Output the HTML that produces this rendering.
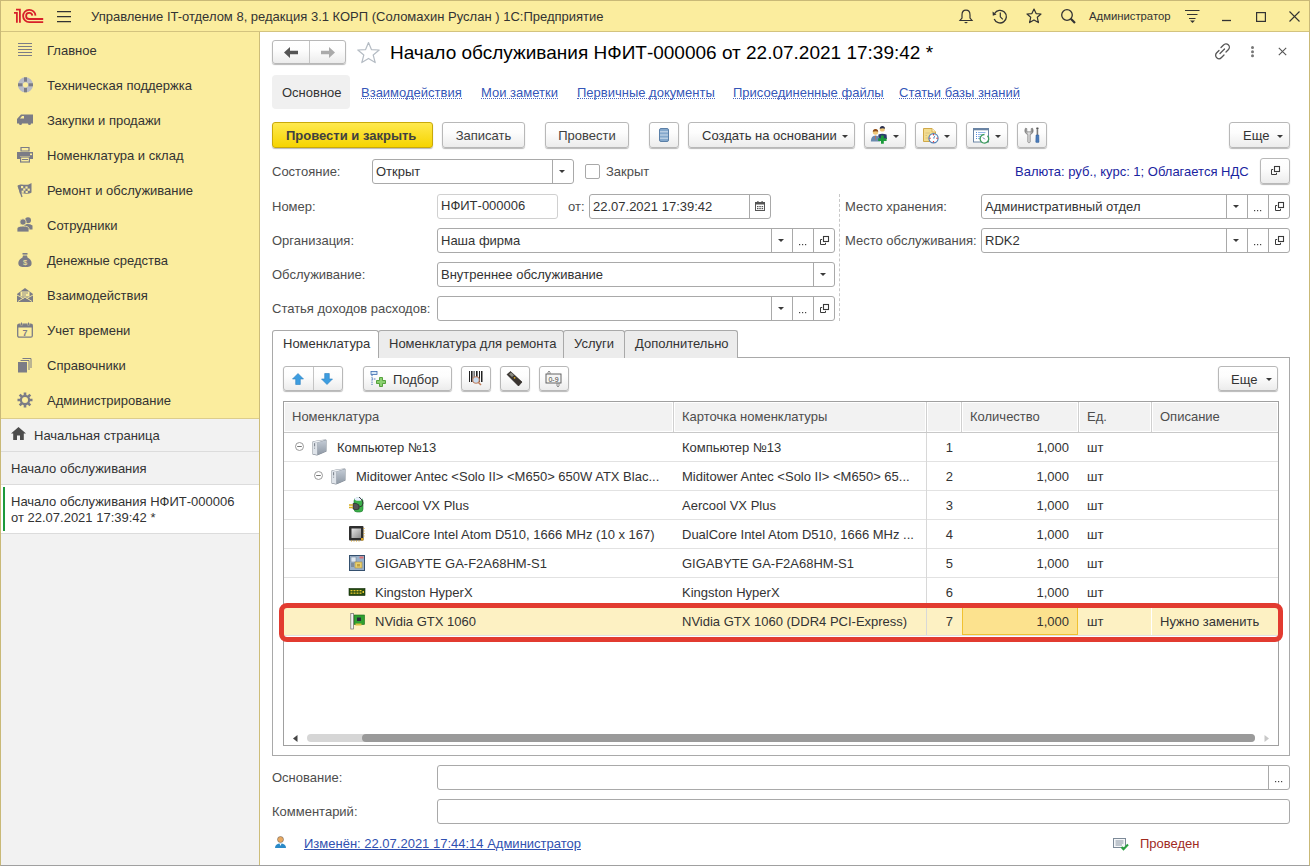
<!DOCTYPE html>
<html><head><meta charset="utf-8">
<style>
*{box-sizing:border-box;margin:0;padding:0}
html,body{width:1310px;height:866px;overflow:hidden;background:#fff}
body{font-family:"Liberation Sans",sans-serif;font-size:13px;color:#333;position:relative}
.a{position:absolute}
.t{position:absolute;height:20px;line-height:20px;white-space:nowrap}
svg{position:absolute;overflow:visible}
.btn{position:absolute;height:26px;border:1px solid #b8b8b8;border-radius:3px;background:linear-gradient(#fff 0%,#fdfdfd 40%,#ececec 100%);box-shadow:0 1px 1px rgba(0,0,0,.28);color:#404040}
.btn .t{top:2px}
.inp{position:absolute;height:25px;border:1px solid #a9a9a9;border-radius:3px;background:#fff}
.inp .t{top:1px;left:3px}
.div{position:absolute;top:0;bottom:0;width:0;border-left:1px solid #a9a9a9}
.lnk{color:#3556b8}
.lnk span{display:inline-block;line-height:10px;border-bottom:1px dotted #4a66c0}
.dd{position:absolute;width:0;height:0;border-left:3px solid transparent;border-right:3px solid transparent;border-top:3.5px solid #3a3a3a}
</style></head><body>
<!-- window frame -->
<div class="a" style="left:0;top:0;width:1310px;height:866px;border:1px solid #c9b977;border-bottom-color:#a0a0a0"></div>
<!-- title bar -->
<div class="a" style="left:1px;top:1px;width:1308px;height:31px;background:#fbed9e;border-bottom:1px solid #d3c37f"></div>
<svg style="left:0;top:0" width="50" height="30" viewBox="0 0 50 30">
 <g fill="none" stroke="#d7212a" stroke-width="1.8">
  <path d="M14 12.9 H16.9 V22.8 M16 9.7 H19.9 V22.8"/>
  <path d="M35.5 15.6 A6.2 6.2 0 1 0 29.3 22.2 H43.2"/>
  <path d="M32.3 15.6 A3.1 3.1 0 1 0 29.1 19 H43.2"/>
 </g>
</svg>
<svg style="left:57px;top:11px" width="14" height="12" viewBox="0 0 14 12"><g stroke="#333" stroke-width="1.2"><path d="M0 0.6H14M0 5.6H14M0 10.6H14"/></g></svg>
<div class="t" style="left:91px;top:7px;color:#333">Управление IT-отделом 8, редакция 3.1 КОРП (Соломахин Руслан ) 1С:Предприятие</div>
<!-- right title icons -->
<svg style="left:959px;top:9px" width="14" height="15" viewBox="0 0 14 15"><path d="M7 1.2 C4 1.2 3 3.5 3 6 V9 L1 11.5 H13 L11 9 V6 C11 3.5 10 1.2 7 1.2Z" fill="none" stroke="#333" stroke-width="1.2"/><path d="M5 13 H9 L7 14.5Z" fill="#333"/></svg>
<svg style="left:992px;top:9px" width="16" height="15" viewBox="0 0 16 15"><path d="M2.6 4.5 A6.3 6.3 0 1 1 2.2 10" fill="none" stroke="#333" stroke-width="1.3"/><path d="M0.5 2.5 L4.5 5.5 L0.8 6.8Z" fill="#333"/><path d="M8.3 3.5 V7.8 L10.8 10.3" fill="none" stroke="#333" stroke-width="1.2"/></svg>
<svg style="left:1026px;top:8px" width="16" height="16" viewBox="0 0 16 16"><path d="M8 1 L10.1 5.6 L15 6 L11.3 9.3 L12.4 14.6 L8 11.9 L3.6 14.6 L4.7 9.3 L1 6 L5.9 5.6Z" fill="none" stroke="#333" stroke-width="1.2" stroke-linejoin="round"/></svg>
<svg style="left:1061px;top:9px" width="15" height="15" viewBox="0 0 15 15"><circle cx="6" cy="6" r="5.3" fill="none" stroke="#333" stroke-width="1.3"/><path d="M9.8 9.8 L14 14" stroke="#333" stroke-width="2.2"/></svg>
<div class="t" style="left:1089px;top:6px;font-size:11.3px;color:#333">Администратор</div>
<svg style="left:1185px;top:10px" width="15" height="14" viewBox="0 0 15 14"><g stroke="#333" stroke-width="1.1"><path d="M0 0.5H14.5M2 4.5H12.5M4 8.5H10.5"/></g><path d="M5 10.5 H10 L7.5 13Z" fill="#333"/></svg>
<svg style="left:1222px;top:19px" width="10" height="3" viewBox="0 0 10 3"><path d="M0 1.5 H9" stroke="#333" stroke-width="1.3"/></svg>
<svg style="left:1256px;top:12px" width="10" height="10" viewBox="0 0 10 10"><rect x="0.6" y="0.6" width="8.8" height="8.8" fill="none" stroke="#333" stroke-width="1.2"/></svg>
<svg style="left:1289px;top:11px" width="11" height="11" viewBox="0 0 11 11"><path d="M0.5 0.5 L10.5 10.5 M10.5 0.5 L0.5 10.5" stroke="#333" stroke-width="1.1"/></svg>

<!-- sidebar -->
<div class="a" style="left:1px;top:32px;width:259px;height:833px;background:#f2f2f2;border-right:1px solid #cdbd7a"></div>
<div class="a" style="left:1px;top:32px;width:258px;height:387px;background:#fbed9e;border-bottom:1px solid #dccd8c"></div>
<svg style="left:17px;top:42px" width="16" height="16" viewBox="0 0 16 16"><g stroke="#7b7c86" stroke-width="1"><path d="M1 1.5H15M1 4.5H15M1 7.5H15M1 10.5H15M1 13.5H15"/></g></svg>
<div class="t" style="left:47px;top:41px">Главное</div>
<svg style="left:17px;top:77px" width="16" height="16" viewBox="0 0 16 16"><circle cx="8.5" cy="7.8" r="5.1" fill="none" stroke="#b9bcc6" stroke-width="4.9"/><g fill="#7b7c86"><rect x="7" y="0.3" width="3" height="4.4"/><rect x="7" y="10.9" width="3" height="4.4"/><rect x="1" y="6.3" width="4.4" height="3"/><rect x="11.6" y="6.3" width="4.4" height="3"/></g></svg>
<div class="t" style="left:47px;top:76px">Техническая поддержка</div>
<svg style="left:17px;top:113px" width="16" height="16" viewBox="0 0 16 16"><path d="M0 6 L4 1.5 H16 V10.5 H14 A1.5 1.5 0 0 1 11 10.5 H5 A1.5 1.5 0 0 1 2 10.5 H0Z" fill="#7b7c86"/><path d="M3 5.5 L5 3 H7 V5.5Z" fill="#fbed9e"/></svg>
<div class="t" style="left:47px;top:111px">Закупки и продажи</div>
<svg style="left:17px;top:147px" width="16" height="16" viewBox="0 0 16 16"><path d="M4 0.5H12V4H4Z" fill="none" stroke="#7b7c86" stroke-width="1.2"/><path d="M0 5H16V12H13V9H3V12H0Z" fill="#7b7c86"/><rect x="3.6" y="10" width="8.8" height="5" fill="none" stroke="#7b7c86" stroke-width="1.2"/><rect x="13" y="6.5" width="2" height="1.6" fill="#fbed9e"/><path d="M5 12.5H11" stroke="#7b7c86"/></svg>
<div class="t" style="left:47px;top:146px">Номенклатура и склад</div>
<svg style="left:17px;top:182px" width="16" height="16" viewBox="0 0 16 16"><path d="M1 3.5 C5 0.5 9 5 14.5 1 V10.5 C9 14 5 9.5 3 12 Z" fill="#7b7c86"/><path d="M1 3.5 L5 15" stroke="#7b7c86" stroke-width="1.3"/><g fill="#fbed9e"><rect x="4" y="4" width="2.2" height="2.2"/><rect x="8.4" y="4.4" width="2.2" height="2.2"/><rect x="6.2" y="6.4" width="2.2" height="2.2"/><rect x="10.6" y="6.6" width="2.2" height="2.2"/><rect x="4.6" y="8.6" width="2.2" height="2.2"/><rect x="8.6" y="9" width="2.2" height="2.2"/></g></svg>
<div class="t" style="left:47px;top:181px">Ремонт и обслуживание</div>
<svg style="left:17px;top:217px" width="16" height="16" viewBox="0 0 16 16"><g fill="#7b7c86"><circle cx="11" cy="3.3" r="3"/><path d="M7 8 Q11 6 15.5 8.5 V12.5 H9Z"/><circle cx="6" cy="5" r="3.2" stroke="#fbed9e" stroke-width="0.8"/><path d="M0 11.5 Q0.5 9 6 9 Q11.5 9 12 11.5 V15 H0Z" stroke="#fbed9e" stroke-width="0.8"/></g></svg>
<div class="t" style="left:47px;top:216px">Сотрудники</div>
<svg style="left:17px;top:252px" width="16" height="16" viewBox="0 0 16 16"><g fill="#7b7c86"><rect x="5.5" y="1" width="5" height="1.6"/><path d="M6 3.5 H10 L10.5 5.5 C14 7 15 10 14.5 12.5 C14 14.5 12 15 8 15 C4 15 2 14.5 1.5 12.5 C1 10 2 7 5.5 5.5Z"/></g><text x="8" y="12.8" font-size="7.5" text-anchor="middle" fill="#fbed9e" font-family="Liberation Sans">$</text></svg>
<div class="t" style="left:47px;top:251px">Денежные средства</div>
<svg style="left:17px;top:287px" width="16" height="16" viewBox="0 0 16 16"><path d="M0 7 L8 1 L16 7 V15 H0Z" fill="#7b7c86"/><rect x="3.5" y="4.5" width="9" height="5" fill="#fbed9e"/><g stroke="#7b7c86" stroke-width="0.8"><path d="M5 6H11M5 8H9"/></g><path d="M0 8 L6.5 11.5 M16 8 L9.5 11.5 M1 14.5 L8 10 L15 14.5" stroke="#fbed9e" stroke-width="0.9" fill="none"/></svg>
<div class="t" style="left:47px;top:286px">Взаимодействия</div>
<svg style="left:17px;top:322px" width="16" height="16" viewBox="0 0 16 16"><rect x="0.7" y="2.2" width="14.6" height="13" rx="1.5" fill="none" stroke="#7b7c86" stroke-width="1.3"/><rect x="0.7" y="2.2" width="14.6" height="3.3" fill="#7b7c86"/><g stroke="#fbed9e" stroke-width="1.6"><path d="M4.5 0V3.5M11.5 0V3.5"/></g><g stroke="#7b7c86" stroke-width="1"><path d="M4.5 0.5V3.5M11.5 0.5V3.5"/></g><text x="8" y="14" font-size="9" font-weight="bold" text-anchor="middle" fill="#7b7c86" font-family="Liberation Sans">7</text></svg>
<div class="t" style="left:47px;top:321px">Учет времени</div>
<svg style="left:17px;top:357px" width="16" height="16" viewBox="0 0 16 16"><rect x="1" y="5" width="9" height="10.5" fill="#7b7c86"/><path d="M3.5 3.5 H12 V13" fill="none" stroke="#7b7c86" stroke-width="1"/><path d="M5.5 1.5 H14 V11" fill="none" stroke="#7b7c86" stroke-width="1"/></svg>
<div class="t" style="left:47px;top:356px">Справочники</div>
<svg style="left:17px;top:392px" width="16" height="16" viewBox="0 0 16 16"><g fill="#7b7c86"><circle cx="8" cy="8" r="5.2"/><g stroke="#7b7c86" stroke-width="2.6"><path d="M8 0.5V15.5M0.5 8H15.5M2.7 2.7L13.3 13.3M13.3 2.7L2.7 13.3"/></g></g><circle cx="8" cy="8" r="3" fill="#fbed9e"/></svg>
<div class="t" style="left:47px;top:391px">Администрирование</div>
<svg style="left:11px;top:427px" width="15" height="13" viewBox="0 0 15 13"><path d="M7.5 0 L15 6.5 H12.8 V13 H9 V8.5 H6 V13 H2.2 V6.5 H0Z" fill="#4d4d4d"/></svg>
<div class="t" style="left:34px;top:426px">Начальная страница</div>
<div class="a" style="left:1px;top:451px;width:258px;height:1px;background:#dcdcdc"></div>
<div class="t" style="left:11px;top:459px">Начало обслуживания</div>
<div class="a" style="left:1px;top:484px;width:258px;height:1px;background:#dcdcdc"></div>
<div class="a" style="left:1px;top:485px;width:258px;height:49px;background:#fff;border-bottom:1px solid #dcdcdc"></div>
<div class="a" style="left:3px;top:487px;width:2px;height:44px;background:#1c9a3c"></div>
<div class="a" style="left:11px;top:494px;line-height:16px;white-space:nowrap">Начало обслуживания НФИТ-000006<br>от 22.07.2021 17:39:42 *</div>
<div class="btn" style="left:272px;top:40px;width:74px;height:24px"></div>
<div class="a" style="left:309px;top:41px;width:1px;height:22px;background:#c4c4c4"></div>
<svg style="left:284px;top:47px" width="15" height="11" viewBox="0 0 15 11"><path d="M0 5.5 L6 0 V3.8 H14 V7.2 H6 V11Z" fill="#555"/></svg>
<svg style="left:320px;top:47px" width="15" height="11" viewBox="0 0 15 11"><path d="M15 5.5 L9 0 V3.8 H1 V7.2 H9 V11Z" fill="#aaa"/></svg>
<svg style="left:356px;top:41px" width="25" height="23" viewBox="0 0 25 23"><path d="M12.5 1.5 L15.4 8.6 L23.2 9 L17.2 14 L19.2 21.6 L12.5 17.4 L5.8 21.6 L7.8 14 L1.8 9 L9.6 8.6Z" fill="none" stroke="#b5bcc4" stroke-width="1.2" stroke-linejoin="round"/></svg>
<div class="a" style="left:390px;top:41px;height:24px;line-height:24px;font-size:19px;color:#000;white-space:nowrap">Начало обслуживания НФИТ-000006 от 22.07.2021 17:39:42 *</div>
<svg style="left:1214px;top:43px" width="17" height="17" viewBox="0 0 17 17"><g fill="none" stroke="#555" stroke-width="1.3" stroke-linecap="round"><path d="M7 4.5 L9.5 2 A2.8 2.8 0 0 1 14.5 6.5 L12 9"/><path d="M10 12 L7.5 14.5 A2.8 2.8 0 0 1 2.5 10 L5 7.5"/><path d="M6 10.5 L10.5 6"/></g></svg>
<svg style="left:1250px;top:46px" width="5" height="12" viewBox="0 0 5 12"><g fill="#777"><circle cx="2.5" cy="1.6" r="1.5"/><circle cx="2.5" cy="5.7" r="1.5"/><circle cx="2.5" cy="9.8" r="1.5"/></g></svg>
<svg style="left:1278px;top:47px" width="9" height="9" viewBox="0 0 9 9"><path d="M0.8 0.8 L8.2 8.2 M8.2 0.8 L0.8 8.2" stroke="#555" stroke-width="1.1"/></svg>
<div class="a" style="left:272px;top:75px;width:78px;height:34px;background:#f0f0f0;border-radius:4px"></div>
<div class="t" style="left:282px;top:83px;">Основное</div>
<div class="t lnk" style="left:361px;top:83px"><span>Взаимодействия</span></div>
<div class="t lnk" style="left:481px;top:83px"><span>Мои заметки</span></div>
<div class="t lnk" style="left:577px;top:83px"><span>Первичные документы</span></div>
<div class="t lnk" style="left:733px;top:83px"><span>Присоединенные файлы</span></div>
<div class="t lnk" style="left:899px;top:83px"><span>Статьи базы знаний</span></div>
<div class="btn" style="left:272px;top:122px;width:161px;background:linear-gradient(#ffe94e,#f6d400);border-color:#c9a90a"></div>
<div class="t" style="left:286px;top:126px;font-weight:bold;color:#404040">Провести и закрыть</div>
<div class="btn" style="left:442px;top:122px;width:83px"><div class="t" style="left:0;width:81px;text-align:center;top:3px">Записать</div></div>
<div class="btn" style="left:545px;top:122px;width:84px"><div class="t" style="left:0;width:82px;text-align:center;top:3px">Провести</div></div>
<div class="btn" style="left:649px;top:122px;width:30px"></div>
<svg style="left:659px;top:128px" width="10" height="14" viewBox="0 0 10 14"><rect x="0.5" y="0.5" width="9" height="13" rx="1.5" fill="#84a8cc" stroke="#5b80a8"/><g stroke="#e4edf6" stroke-width="0.8"><path d="M1 3.8H9M1 7H9M1 10.2H9"/></g></svg>
<div class="btn" style="left:688px;top:122px;width:167px"></div>
<div class="t" style="left:702px;top:126px;">Создать на основании</div>
<div class="dd" style="left:842px;top:135px"></div>
<div class="btn" style="left:864px;top:122px;width:42px"></div>
<div class="btn" style="left:915px;top:122px;width:42px"></div>
<div class="btn" style="left:966px;top:122px;width:42px"></div>
<div class="btn" style="left:1017px;top:122px;width:30px"></div>
<div class="dd" style="left:893px;top:135px"></div>
<div class="dd" style="left:944px;top:135px"></div>
<div class="dd" style="left:995px;top:135px"></div>
<svg style="left:870px;top:126px" width="20" height="18" viewBox="0 0 20 18"><path d="M8.5 8.5 Q12 7 16.5 8.5 L17 13 H8Z" fill="#2a3a6a"/><circle cx="12.3" cy="3" r="2.6" fill="#f0c878"/><path d="M9.7 2.8 Q10 0 12.3 0 Q14.8 0 15 2.8 Q13 1.5 9.7 2.8Z" fill="#2a3050"/><path d="M0.8 15.5 Q1 9.5 5.5 9.5 Q10 9.5 10.2 15.5Z" fill="#6a8ab0"/><path d="M5 10 L5.5 15 L6 10Z" fill="#e06a3a"/><circle cx="5.5" cy="6" r="2.7" fill="#f0c878"/><path d="M2.8 5.8 Q3 3 5.5 3 Q8 3 8.2 5.8 Q6 4.5 2.8 5.8Z" fill="#8a4a1a"/><path d="M11 9.5 H13.8 V12.3 H16.6 V15 H13.8 V17.8 H11 V15 H8.2 V12.3 H11Z" fill="#1a9a3a"/></svg>
<svg style="left:922px;top:127px" width="18" height="18" viewBox="0 0 18 18"><path d="M1.5 1.5 H10 L13.5 5 V14.5 H1.5Z" fill="#f2dc90" stroke="#d0a848" stroke-width="1"/><path d="M10 1.5 V5 H13.5" fill="#fff3c8" stroke="#d0a848" stroke-width="0.8"/><g stroke="#d8c080" stroke-width="0.9"><path d="M3.5 6H8M3.5 8.5H5M3.5 11H6"/></g><circle cx="11.5" cy="11.2" r="4.6" fill="#fff" stroke="#4d80b8" stroke-width="1.2"/><g fill="#e02a2a"><circle cx="11.5" cy="7.7" r="0.7"/><circle cx="15" cy="11.2" r="0.7"/><circle cx="11.5" cy="14.7" r="0.7"/><circle cx="8" cy="11.2" r="0.7"/></g><path d="M11.5 11.2 L13 8.8 M11.5 11.2 L12.6 11" stroke="#4d80b8" stroke-width="0.9"/></svg>
<svg style="left:973px;top:128px" width="18" height="17" viewBox="0 0 18 17"><rect x="0.5" y="0.5" width="15" height="13.5" fill="#fff" stroke="#6a84a4"/><rect x="0.5" y="0.5" width="15" height="1.8" fill="#6a84a4"/><g fill="#5a8ad8"><rect x="3" y="4" width="1" height="1"/><rect x="3" y="6" width="1" height="1"/><rect x="3" y="8" width="1" height="1"/><rect x="3" y="10" width="1" height="1"/></g><g stroke="#8ab0e8" stroke-width="0.9"><path d="M5 4.5H12.5M5 6.5H9.5M5 8.5H8M5 10.5H7"/></g><path d="M14.5 7.8 A4.3 4.3 0 1 1 11.5 6.5" fill="#fff" stroke="#3a9a5a" stroke-width="1.3"/><path d="M10 9.5 L11.8 11.3" stroke="#3a5a8a" stroke-width="0.9"/></svg>
<svg style="left:1024px;top:127px" width="18" height="17" viewBox="0 0 18 17"><defs><linearGradient id="wg" x1="0" y1="0" x2="1" y2="0"><stop offset="0" stop-color="#8a8a8a"/><stop offset="0.5" stop-color="#e8e8e8"/><stop offset="1" stop-color="#7a7a7a"/></linearGradient></defs><path d="M1.5 1.2 Q0.5 3 1 5 Q2 7.2 3.8 7.5 V15 Q4.3 15.8 5 15.8 Q5.7 15.8 6.2 15 V7.5 Q8 7.2 9 5 Q9.5 3 8.5 1.2 L7.2 1.6 V4.8 H2.8 V1.6Z" fill="url(#wg)" stroke="#6a6a6a" stroke-width="0.6"/><rect x="12.6" y="1" width="1.6" height="7" fill="#7a7a7a"/><rect x="12.2" y="0.5" width="2.4" height="1.5" rx="0.7" fill="#555"/><path d="M12 8 H14.8 L15 15.2 Q13.4 16 11.8 15.2Z" fill="#4a7ab8" stroke="#2a5a98" stroke-width="0.5"/></svg>
<div class="btn" style="left:1229px;top:122px;width:61px"></div>
<div class="t" style="left:1243px;top:126px;">Еще</div>
<div class="dd" style="left:1277px;top:135px"></div>
<div class="t" style="left:272px;top:162px;color:#4d4d4d">Состояние:</div>
<div class="inp" style="left:372px;top:159px;width:202px"><div class="t" style="top:2px">Открыт</div><div class="div" style="left:179px"></div></div>
<div class="dd" style="left:559px;top:170px"></div>
<div class="a" style="left:585px;top:164px;width:15px;height:15px;border:1px solid #a9a9a9;border-radius:2px;background:#fff"></div>
<div class="t" style="left:606px;top:162px;color:#4d4d4d">Закрыт</div>
<div class="t" style="left:1015px;top:162px;color:#1a24a0">Валюта: руб., курс: 1; Облагается НДС</div>
<div class="btn" style="left:1260px;top:158px;width:30px"></div>
<svg style="left:1271px;top:166px" width="10" height="10" viewBox="0 0 10 10"><path d="M2.2 3.5 H0.5 V8.5 H5.5 V6.8" fill="none" stroke="#3a3a3a" stroke-width="1"/><rect x="3.5" y="0.5" width="5" height="5" fill="none" stroke="#3a3a3a" stroke-width="1.1"/></svg>
<div class="t" style="left:272px;top:197px;color:#4d4d4d">Номер:</div>
<div class="inp" style="left:437px;top:194px;width:121px;height:25px;border-color:#d0d0d0"><div class="t" style="top:1px">НФИТ-000006</div></div>
<div class="t" style="left:568px;top:197px;color:#4d4d4d">от:</div>
<div class="inp" style="left:589px;top:194px;width:182px"><div class="t" style="top:2px">22.07.2021 17:39:42</div><div class="div" style="left:159px"></div></div>
<svg style="left:755px;top:201px" width="10" height="10" viewBox="0 0 10 10"><rect x="0.5" y="1.5" width="9" height="8" fill="none" stroke="#555" stroke-width="1"/><rect x="0.5" y="1.5" width="9" height="2" fill="#555"/><g fill="#555"><rect x="2" y="5" width="1.5" height="1.2"/><rect x="4.3" y="5" width="1.5" height="1.2"/><rect x="6.6" y="5" width="1.5" height="1.2"/><rect x="2" y="7" width="1.5" height="1.2"/><rect x="4.3" y="7" width="1.5" height="1.2"/><rect x="6.6" y="7" width="1.5" height="1.2"/></g><rect x="2.3" y="0" width="1.2" height="2" fill="#555"/><rect x="6.5" y="0" width="1.2" height="2" fill="#555"/></svg>
<div class="a" style="left:839px;top:194px;width:1px;height:127px;border-left:1px dashed #c8c8c8"></div>
<div class="t" style="left:845px;top:197px;color:#4d4d4d">Место хранения:</div>
<div class="inp" style="left:981px;top:194px;width:309px"><div class="t" style="top:2px">Административный отдел</div><div class="div" style="left:244px"></div><div class="div" style="left:265px"></div><div class="div" style="left:286px"></div></div>
<div class="dd" style="left:1233px;top:205px"></div>
<svg style="left:1254px;top:210px" width="8" height="2" viewBox="0 0 8 2"><g fill="#444"><rect x="0" y="0" width="1.2" height="1.2"/><rect x="3" y="0" width="1.2" height="1.2"/><rect x="6" y="0" width="1.2" height="1.2"/></g></svg>
<svg style="left:1275px;top:202px" width="10" height="10" viewBox="0 0 10 10"><path d="M2.2 3.5 H0.5 V8.5 H5.5 V6.8" fill="none" stroke="#3a3a3a" stroke-width="1"/><rect x="3.5" y="0.5" width="5" height="5" fill="none" stroke="#3a3a3a" stroke-width="1.1"/></svg>
<div class="t" style="left:845px;top:231px;color:#4d4d4d">Место обслуживания:</div>
<div class="inp" style="left:981px;top:228px;width:309px"><div class="t" style="top:2px">RDK2</div><div class="div" style="left:244px"></div><div class="div" style="left:265px"></div><div class="div" style="left:286px"></div></div>
<div class="dd" style="left:1233px;top:239px"></div>
<svg style="left:1254px;top:244px" width="8" height="2" viewBox="0 0 8 2"><g fill="#444"><rect x="0" y="0" width="1.2" height="1.2"/><rect x="3" y="0" width="1.2" height="1.2"/><rect x="6" y="0" width="1.2" height="1.2"/></g></svg>
<svg style="left:1275px;top:236px" width="10" height="10" viewBox="0 0 10 10"><path d="M2.2 3.5 H0.5 V8.5 H5.5 V6.8" fill="none" stroke="#3a3a3a" stroke-width="1"/><rect x="3.5" y="0.5" width="5" height="5" fill="none" stroke="#3a3a3a" stroke-width="1.1"/></svg>
<div class="t" style="left:272px;top:231px;color:#4d4d4d">Организация:</div>
<div class="inp" style="left:437px;top:228px;width:398px"><div class="t" style="top:2px">Наша фирма</div><div class="div" style="left:333px"></div><div class="div" style="left:354px"></div><div class="div" style="left:375px"></div></div>
<div class="dd" style="left:778px;top:239px"></div>
<svg style="left:799px;top:244px" width="8" height="2" viewBox="0 0 8 2"><g fill="#444"><rect x="0" y="0" width="1.2" height="1.2"/><rect x="3" y="0" width="1.2" height="1.2"/><rect x="6" y="0" width="1.2" height="1.2"/></g></svg>
<svg style="left:820px;top:236px" width="10" height="10" viewBox="0 0 10 10"><path d="M2.2 3.5 H0.5 V8.5 H5.5 V6.8" fill="none" stroke="#3a3a3a" stroke-width="1"/><rect x="3.5" y="0.5" width="5" height="5" fill="none" stroke="#3a3a3a" stroke-width="1.1"/></svg>
<div class="t" style="left:272px;top:265px;color:#4d4d4d">Обслуживание:</div>
<div class="inp" style="left:437px;top:262px;width:398px"><div class="t" style="top:2px">Внутреннее обслуживание</div><div class="div" style="left:375px"></div></div>
<div class="dd" style="left:820px;top:273px"></div>
<div class="t" style="left:272px;top:299px;color:#4d4d4d">Статья доходов расходов:</div>
<div class="inp" style="left:437px;top:296px;width:398px"><div class="t" style="top:2px"></div><div class="div" style="left:333px"></div><div class="div" style="left:354px"></div><div class="div" style="left:375px"></div></div>
<div class="dd" style="left:778px;top:307px"></div>
<svg style="left:799px;top:312px" width="8" height="2" viewBox="0 0 8 2"><g fill="#444"><rect x="0" y="0" width="1.2" height="1.2"/><rect x="3" y="0" width="1.2" height="1.2"/><rect x="6" y="0" width="1.2" height="1.2"/></g></svg>
<svg style="left:820px;top:304px" width="10" height="10" viewBox="0 0 10 10"><path d="M2.2 3.5 H0.5 V8.5 H5.5 V6.8" fill="none" stroke="#3a3a3a" stroke-width="1"/><rect x="3.5" y="0.5" width="5" height="5" fill="none" stroke="#3a3a3a" stroke-width="1.1"/></svg>
<div class="a" style="left:272px;top:357px;width:1018px;height:399px;border:1px solid #a9a9a9;border-top:none"></div>
<div class="a" style="left:378px;top:357px;width:912px;height:1px;background:#a9a9a9"></div>
<div class="a" style="left:378px;top:330px;width:186px;height:28px;background:#ececec;border:1px solid #a9a9a9;border-bottom:none;border-radius:3px 3px 0 0"></div>
<div class="t" style="left:389px;top:334px;">Номенклатура для ремонта</div>
<div class="a" style="left:563px;top:330px;width:62px;height:28px;background:#ececec;border:1px solid #a9a9a9;border-bottom:none;border-radius:3px 3px 0 0"></div>
<div class="t" style="left:574px;top:334px;">Услуги</div>
<div class="a" style="left:624px;top:330px;width:114px;height:28px;background:#ececec;border:1px solid #a9a9a9;border-bottom:none;border-radius:3px 3px 0 0"></div>
<div class="t" style="left:635px;top:334px;">Дополнительно</div>
<div class="a" style="left:272px;top:330px;width:107px;height:28px;background:#fff;border:1px solid #a9a9a9;border-bottom:none;border-radius:3px 3px 0 0"></div>
<div class="t" style="left:283px;top:334px;">Номенклатура</div>
<div class="btn" style="left:283px;top:366px;width:60px;height:25px"></div>
<div class="a" style="left:313px;top:367px;width:1px;height:23px;background:#c4c4c4"></div>
<svg style="left:292px;top:373px" width="12" height="12" viewBox="0 0 12 12"><path d="M6 0.5 L11.5 6 H8.3 V11.5 H3.7 V6 H0.5Z" fill="#3d9de0" stroke="#2a80c0" stroke-width="0.6"/></svg>
<svg style="left:321px;top:373px" width="12" height="12" viewBox="0 0 12 12"><path d="M6 11.5 L11.5 6 H8.3 V0.5 H3.7 V6 H0.5Z" fill="#3d9de0" stroke="#2a80c0" stroke-width="0.6"/></svg>
<div class="btn" style="left:363px;top:366px;width:89px;height:25px"></div>
<svg style="left:370px;top:371px" width="16" height="17" viewBox="0 0 16 17"><rect x="1" y="0.5" width="6" height="3" fill="#d8e8f8" stroke="#3a6ab0" stroke-width="0.8"/><path d="M2 4 V15 M2 8 H6" stroke="#3a6ab0" stroke-width="1" stroke-dasharray="1.2 1"/><path d="M9.5 6.5 H12.5 V9.5 H15.5 V12.5 H12.5 V15.5 H9.5 V12.5 H6.5 V9.5 H9.5Z" fill="#8ad070" stroke="#4a9a30" stroke-width="0.9"/></svg>
<div class="t" style="left:393px;top:370px;">Подбор</div>
<div class="btn" style="left:461px;top:366px;width:30px;height:25px"></div>
<div class="btn" style="left:500px;top:366px;width:30px;height:25px"></div>
<div class="btn" style="left:539px;top:366px;width:30px;height:25px"></div>
<svg style="left:468px;top:371px" width="16" height="16" viewBox="0 0 16 16"><g fill="#222"><rect x="1" y="0" width="1" height="11"/><rect x="3" y="0" width="1.6" height="11"/><rect x="5.6" y="0" width="1" height="6"/><rect x="8" y="0" width="1.6" height="6"/><rect x="11" y="0" width="1" height="11"/><rect x="13" y="0" width="1.5" height="11"/></g><circle cx="8" cy="9" r="3.3" fill="#c8dcf0" stroke="#c08060" stroke-width="1.1"/><path d="M10.3 11.3 L13 14" stroke="#c08060" stroke-width="1.6"/></svg>
<svg style="left:506px;top:371px" width="17" height="16" viewBox="0 0 17 16"><path d="M1 3.5 L4.5 0.5 L16 11 L12.5 15Z" fill="#3a3430" stroke="#1a1410" stroke-width="0.6"/><path d="M3 3.2 L5 1.5 L8 4.3 L6 6Z" fill="#8a8a80"/><circle cx="8.6" cy="6.8" r="0.9" fill="#e0b020"/></svg>
<svg style="left:545px;top:371px" width="18" height="16" viewBox="0 0 18 16"><rect x="1" y="3" width="15" height="9" fill="#f4f4f4" stroke="#555" stroke-width="0.9"/><text x="8.5" y="10.5" font-size="7" text-anchor="middle" fill="#444" font-family="Liberation Sans">0-9</text><path d="M3 3 V1 L4 0 L5 1 V3 M12 12 V15 L13 16 L14 15 V12" fill="none" stroke="#777" stroke-width="0.8"/></svg>
<div class="btn" style="left:1218px;top:366px;width:60px;height:25px"></div>
<div class="t" style="left:1231px;top:370px;">Еще</div>
<div class="dd" style="left:1266px;top:378px"></div>
<div class="a" style="left:283px;top:401px;width:996px;height:345px;border:1px solid #a0a0a0;background:#fff"></div>
<div class="a" style="left:285px;top:403px;width:992px;height:28px;background:#f2f2f2"></div>
<div class="a" style="left:284px;top:432px;width:994px;height:1px;background:#c8c8c8"></div>
<div class="a" style="left:672px;top:402px;width:3px;height:30px;background:#fff"></div><div class="a" style="left:673px;top:402px;width:1px;height:30px;background:#d0d0d0"></div>
<div class="a" style="left:925px;top:402px;width:3px;height:30px;background:#fff"></div><div class="a" style="left:926px;top:402px;width:1px;height:30px;background:#d0d0d0"></div>
<div class="a" style="left:960px;top:402px;width:3px;height:30px;background:#fff"></div><div class="a" style="left:961px;top:402px;width:1px;height:30px;background:#d0d0d0"></div>
<div class="a" style="left:1077px;top:402px;width:3px;height:30px;background:#fff"></div><div class="a" style="left:1078px;top:402px;width:1px;height:30px;background:#d0d0d0"></div>
<div class="a" style="left:1150px;top:402px;width:3px;height:30px;background:#fff"></div><div class="a" style="left:1151px;top:402px;width:1px;height:30px;background:#d0d0d0"></div>
<div class="t" style="left:292px;top:407px;color:#4d4d4d">Номенклатура</div>
<div class="t" style="left:682px;top:407px;color:#4d4d4d">Карточка номенклатуры</div>
<div class="t" style="left:970px;top:407px;color:#4d4d4d">Количество</div>
<div class="t" style="left:1087px;top:407px;color:#4d4d4d">Ед.</div>
<div class="t" style="left:1160px;top:407px;color:#4d4d4d">Описание</div>
<div class="a" style="left:284px;top:461px;width:994px;height:1px;background:#e2e2e2"></div>
<svg style="left:294px;top:442px" width="11" height="10" viewBox="0 0 11 10"><circle cx="5.5" cy="4.5" r="4" fill="#fff" stroke="#9a9a9a" stroke-width="1"/><path d="M3.2 4.5 H7.8" stroke="#777" stroke-width="1"/></svg>
<svg style="left:312px;top:439px" width="15" height="17" viewBox="0 0 15 17"><defs><linearGradient id="cg312" x1="0" y1="0" x2="0" y2="1"><stop offset="0" stop-color="#c4ccd6"/><stop offset="1" stop-color="#8e98a4"/></linearGradient></defs><path d="M0.5 2.5 Q6 0.8 13.8 0.5 L14.5 1 V12.5 Q9 15 5 16.5 L0.5 15.5Z" fill="#7d8590"/><path d="M1 2.7 Q6 1.2 13.5 1 L5.5 3.4Z" fill="#eef1f4"/><path d="M1 2.7 L5.5 3.4 V16 L1 15.1Z" fill="#dfe4ea"/><path d="M5.5 3.4 L14 1.2 V12.3 L5.5 16Z" fill="url(#cg312)"/><path d="M2.6 4.2 V7.4" stroke="#6a727c" stroke-width="0.9"/><path d="M2.6 8.7 V9.6" stroke="#6a727c" stroke-width="0.9"/></svg>
<div class="t" style="left:337px;top:438px;">Компьютер №13</div>
<div class="t" style="left:682px;top:438px;">Компьютер №13</div>
<div class="t" style="left:926px;width:27px;text-align:right;top:438px">1</div>
<div class="t" style="left:962px;width:107px;text-align:right;top:438px">1,000</div>
<div class="t" style="left:1087px;top:438px;">шт</div>
<div class="a" style="left:284px;top:490px;width:994px;height:1px;background:#e2e2e2"></div>
<svg style="left:313px;top:471px" width="11" height="10" viewBox="0 0 11 10"><circle cx="5.5" cy="4.5" r="4" fill="#fff" stroke="#9a9a9a" stroke-width="1"/><path d="M3.2 4.5 H7.8" stroke="#777" stroke-width="1"/></svg>
<svg style="left:331px;top:468px" width="15" height="17" viewBox="0 0 15 17"><defs><linearGradient id="cg331" x1="0" y1="0" x2="0" y2="1"><stop offset="0" stop-color="#c4ccd6"/><stop offset="1" stop-color="#8e98a4"/></linearGradient></defs><path d="M0.5 2.5 Q6 0.8 13.8 0.5 L14.5 1 V12.5 Q9 15 5 16.5 L0.5 15.5Z" fill="#7d8590"/><path d="M1 2.7 Q6 1.2 13.5 1 L5.5 3.4Z" fill="#eef1f4"/><path d="M1 2.7 L5.5 3.4 V16 L1 15.1Z" fill="#dfe4ea"/><path d="M5.5 3.4 L14 1.2 V12.3 L5.5 16Z" fill="url(#cg331)"/><path d="M2.6 4.2 V7.4" stroke="#6a727c" stroke-width="0.9"/><path d="M2.6 8.7 V9.6" stroke="#6a727c" stroke-width="0.9"/></svg>
<div class="t" style="left:356px;top:467px;">Miditower Antec &lt;Solo II&gt; &lt;M650&gt; 650W ATX Blac...</div>
<div class="t" style="left:682px;top:467px;">Miditower Antec &lt;Solo II&gt; &lt;M650&gt; 65...</div>
<div class="t" style="left:926px;width:27px;text-align:right;top:467px">2</div>
<div class="t" style="left:962px;width:107px;text-align:right;top:467px">1,000</div>
<div class="t" style="left:1087px;top:467px;">шт</div>
<div class="a" style="left:284px;top:519px;width:994px;height:1px;background:#e2e2e2"></div>
<svg style="left:349px;top:496px" width="16" height="17" viewBox="0 0 16 17"><rect x="5" y="2" width="9" height="14" rx="3" fill="#3cb04a" stroke="#1a7a2a" stroke-width="0.6"/><ellipse cx="9.5" cy="3" rx="4" ry="1.8" fill="#e8f0ff"/><path d="M4 7.5 Q7 6.5 10 9 L10 13 Q7 14.5 4 13Z" fill="#555" stroke="#222" stroke-width="0.6"/><path d="M0 9 H4 M0 11.5 H4" stroke="#d8b020" stroke-width="1.3"/><path d="M10 11 Q14 11 14 7 Q14 4 10 1" fill="none" stroke="#333" stroke-width="0.9"/></svg>
<div class="t" style="left:375px;top:496px;">Aercool VX Plus</div>
<div class="t" style="left:682px;top:496px;">Aercool VX Plus</div>
<div class="t" style="left:926px;width:27px;text-align:right;top:496px">3</div>
<div class="t" style="left:962px;width:107px;text-align:right;top:496px">1,000</div>
<div class="t" style="left:1087px;top:496px;">шт</div>
<div class="a" style="left:284px;top:548px;width:994px;height:1px;background:#e2e2e2"></div>
<svg style="left:349px;top:526px" width="16" height="16" viewBox="0 0 16 16"><rect x="0" y="0" width="14.5" height="14.5" rx="1" fill="#2e2e2e"/><defs><linearGradient id="cpg" x1="0" y1="0" x2="1" y2="1"><stop offset="0" stop-color="#e8e8e8"/><stop offset="1" stop-color="#8a8a8a"/></linearGradient></defs><rect x="2.5" y="2.5" width="9.5" height="9.5" fill="url(#cpg)"/><g fill="#d8a020"><rect x="14.5" y="2" width="1" height="1"/><rect x="14.5" y="4.5" width="1" height="1"/><rect x="14.5" y="7" width="1" height="1"/><rect x="14.5" y="9.5" width="1" height="1"/><rect x="2" y="14.5" width="1" height="1"/><rect x="4.5" y="14.5" width="1" height="1"/><rect x="7" y="14.5" width="1" height="1"/><rect x="9.5" y="14.5" width="1" height="1"/><rect x="12" y="12" width="2.5" height="2.5"/></g></svg>
<div class="t" style="left:375px;top:525px;">DualCore Intel Atom D510, 1666 MHz (10 x 167)</div>
<div class="t" style="left:682px;top:525px;">DualCore Intel Atom D510, 1666 MHz ...</div>
<div class="t" style="left:926px;width:27px;text-align:right;top:525px">4</div>
<div class="t" style="left:962px;width:107px;text-align:right;top:525px">1,000</div>
<div class="t" style="left:1087px;top:525px;">шт</div>
<div class="a" style="left:284px;top:577px;width:994px;height:1px;background:#e2e2e2"></div>
<svg style="left:349px;top:555px" width="16" height="16" viewBox="0 0 16 16"><rect x="0.5" y="0.5" width="15" height="15" fill="#9ab0c8" stroke="#34506e"/><rect x="2" y="2" width="5" height="5" fill="#dfe8f0" stroke="#6a7a8a" stroke-width="0.5"/><rect x="10.5" y="1.5" width="4" height="2" fill="#e07070"/><rect x="6" y="7" width="7" height="6" fill="#e8d070" stroke="#a08030" stroke-width="0.5"/><rect x="8" y="9" width="3" height="2.5" fill="#c0a040"/><path d="M2 9 H5 M2 11 H5" stroke="#555" stroke-width="0.8"/></svg>
<div class="t" style="left:375px;top:554px;">GIGABYTE GA-F2A68HM-S1</div>
<div class="t" style="left:682px;top:554px;">GIGABYTE GA-F2A68HM-S1</div>
<div class="t" style="left:926px;width:27px;text-align:right;top:554px">5</div>
<div class="t" style="left:962px;width:107px;text-align:right;top:554px">1,000</div>
<div class="t" style="left:1087px;top:554px;">шт</div>
<div class="a" style="left:284px;top:606px;width:994px;height:1px;background:#e2e2e2"></div>
<svg style="left:349px;top:588px" width="16" height="8" viewBox="0 0 16 8"><rect x="0" y="0.5" width="16" height="7" fill="#244a10" stroke="#102a05" stroke-width="0.6"/><g fill="#e8c830"><rect x="1.5" y="2" width="2" height="1.3"/><rect x="4.5" y="2" width="2" height="1.3"/><rect x="7.5" y="2" width="2" height="1.3"/><rect x="10.5" y="2" width="2" height="1.3"/><rect x="1.5" y="4.5" width="2" height="1.3"/><rect x="4.5" y="4.5" width="2" height="1.3"/><rect x="7.5" y="4.5" width="2" height="1.3"/><rect x="10.5" y="4.5" width="2" height="1.3"/><rect x="13.5" y="3" width="1.5" height="2"/></g></svg>
<div class="t" style="left:375px;top:583px;">Kingston HyperX</div>
<div class="t" style="left:682px;top:583px;">Kingston HyperX</div>
<div class="t" style="left:926px;width:27px;text-align:right;top:583px">6</div>
<div class="t" style="left:962px;width:107px;text-align:right;top:583px">1,000</div>
<div class="t" style="left:1087px;top:583px;">шт</div>
<div class="a" style="left:284px;top:607px;width:994px;height:28px;background:#fdf1c3"></div>
<div class="a" style="left:962px;top:607px;width:116px;height:28px;background:#fce28e;border:1px solid #f1c130"></div>
<div class="a" style="left:1151px;top:607px;width:1px;height:28px;background:#fff"></div>
<div class="a" style="left:284px;top:635px;width:994px;height:1px;background:#e2e2e2"></div>
<svg style="left:349px;top:613px" width="17" height="17" viewBox="0 0 17 17"><rect x="5" y="2" width="10.5" height="9.5" fill="#2fa030" stroke="#1a6a1a" stroke-width="0.6"/><rect x="8" y="4.5" width="4" height="3.5" fill="#2a2a3a"/><rect x="6.5" y="10.5" width="6" height="2" fill="#d8c040"/><rect x="1.8" y="0.5" width="2.6" height="15.5" fill="#f4f4f4" stroke="#6a6a6a" stroke-width="0.7"/></svg>
<div class="t" style="left:375px;top:612px;">NVidia GTX 1060</div>
<div class="t" style="left:682px;top:612px;">NVidia GTX 1060 (DDR4 PCI-Express)</div>
<div class="t" style="left:926px;width:27px;text-align:right;top:612px">7</div>
<div class="t" style="left:962px;width:107px;text-align:right;top:612px">1,000</div>
<div class="t" style="left:1087px;top:612px;">шт</div>
<div class="t" style="left:1160px;top:612px;">Нужно заменить</div>
<div class="a" style="left:926px;top:433px;width:1px;height:202px;background:#d8d8d8"></div>
<svg style="left:293px;top:735px" width="5" height="7" viewBox="0 0 5 7"><path d="M4.5 0 V7 L0 3.5Z" fill="#444"/></svg>
<div class="a" style="left:307px;top:734px;width:948px;height:8px;border-radius:4px;background:#d6d6d6"></div>
<div class="a" style="left:362px;top:734px;width:893px;height:8px;border-radius:4px;background:#9a9a9a"></div>
<svg style="left:1264px;top:735px" width="5" height="7" viewBox="0 0 5 7"><path d="M0.5 0 V7 L5 3.5Z" fill="#c8c8c8"/></svg>
<div class="a" style="left:279px;top:603px;width:1004px;height:39px;border:5px solid #e23b30;border-radius:8px"></div>
<div class="t" style="left:272px;top:768px;color:#4d4d4d">Основание:</div>
<div class="inp" style="left:437px;top:765px;width:853px"><div class="div" style="left:830px"></div></div>
<svg style="left:1275px;top:781px" width="8" height="2" viewBox="0 0 8 2"><g fill="#444"><rect x="0" y="0" width="1.2" height="1.2"/><rect x="3" y="0" width="1.2" height="1.2"/><rect x="6" y="0" width="1.2" height="1.2"/></g></svg>
<div class="t" style="left:272px;top:802px;color:#4d4d4d">Комментарий:</div>
<div class="inp" style="left:437px;top:799px;width:853px"></div>
<svg style="left:275px;top:836px" width="11" height="12" viewBox="0 0 11 12"><circle cx="5.5" cy="3.5" r="3" fill="#e8a860" stroke="#555" stroke-width="0.5"/><path d="M0 12 Q0 7.5 5.5 7.5 Q11 7.5 11 12Z" fill="#2a8ac8"/><path d="M4.5 7.5 L5.5 10 L6.5 7.5Z" fill="#fff"/></svg>
<div class="t" style="left:304px;top:834px;color:#3050b0;text-decoration:underline">Изменён: 22.07.2021 17:44:14 Администратор</div>
<svg style="left:1113px;top:838px" width="16" height="13" viewBox="0 0 16 13"><rect x="0.5" y="0.5" width="12" height="9" fill="#f4f6f8" stroke="#7d8a98"/><g stroke="#8a96a4" stroke-width="1"><path d="M2.5 3H10.5M2.5 5H10.5M2.5 7H9"/></g><path d="M8.5 9 L10.5 11.3 L15 6.5" fill="none" stroke="#2aa040" stroke-width="2"/></svg>
<div class="t" style="left:1140px;top:834px;color:#a02a1e">Проведен</div>

</body></html>
